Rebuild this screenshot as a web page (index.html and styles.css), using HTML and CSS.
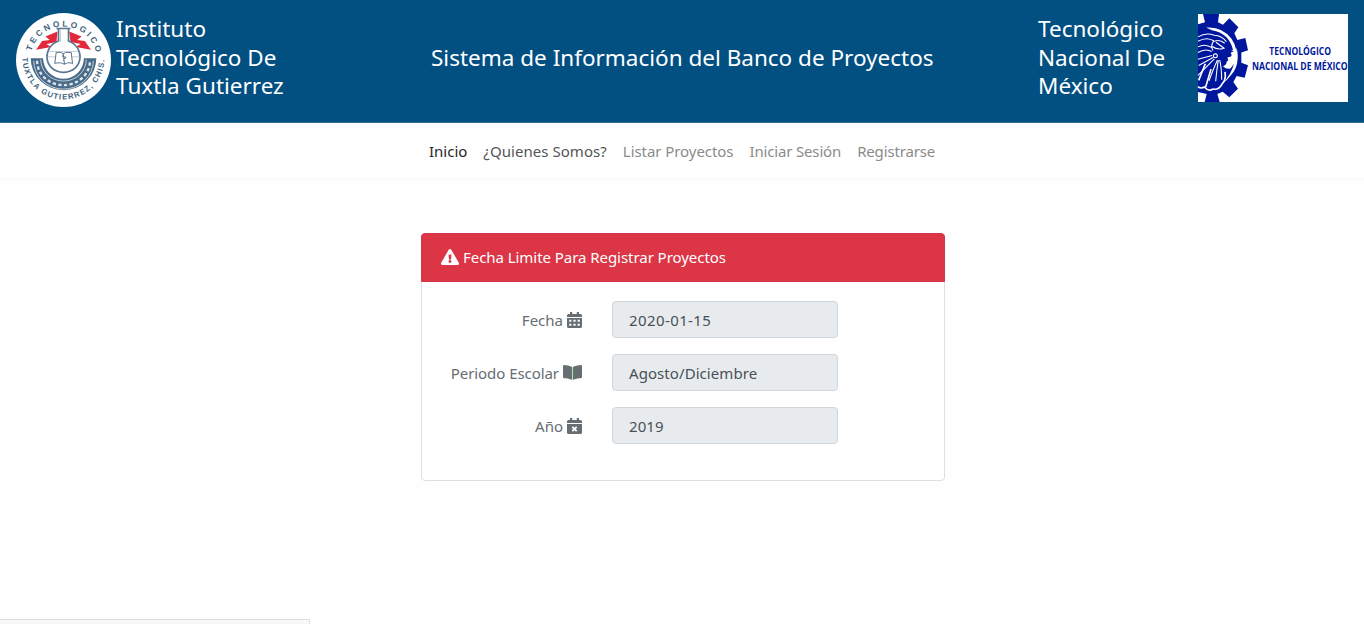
FILE: index.html
```html
<!DOCTYPE html>
<html lang="es">
<head>
<meta charset="utf-8">
<title>Sistema de Información del Banco de Proyectos</title>
<link rel="stylesheet" href="styles.css">
</head>
<body>
<header class="banner">
  <div class="brand">
    <svg class="seal" viewBox="18 16 284 279" preserveAspectRatio="none">
      <defs>
        <path id="arc-top" d="M60 156A100 100 0 0 1 260 156"/>
        <path id="arc-bottom" d="M38 146A122 122 0 1 0 281 136"/>
      </defs>
      <ellipse cx="160" cy="155.500" rx="142" ry="139.500" fill="#fff"/>
      <path d="M142 71L106 86L119 96L96 99L78 125L123 117L109 108L139 102ZM177 71L214 86L201 96L224 99L242 125L197 117L211 108L181 102Z" fill="#e3283b"/>
      <path d="M62 150H99A61 61 0 0 0 221 150H258A98 95 0 0 1 62 150Z" fill="#486987"/>
      <path d="M71 158A89 84 0 0 0 249 158" fill="none" stroke="#fff" stroke-width="2"/>
      <path d="M81 158A79 72 0 0 0 239 158" fill="none" stroke="#dce5ec" stroke-width="7" stroke-dasharray="10 7"/>
      <path d="M92 154A68 64 0 0 0 228 154" fill="none" stroke="#fff" stroke-width="2"/>
      <path d="M139 62H181M145 62V99C96 116 98 189 160 192C222 189 224 116 175 99V62" fill="#fff" stroke="#59758f" stroke-width="5"/>
      <path d="M151 65V102M118 130H202M111 146H136M184 146H209" fill="none" stroke="#a3b3c2" stroke-width="2"/>
      <path d="M138 134Q151 130 159 137Q170 130 183 134L187 165Q172 161 163 168Q151 161 134 165ZM159 137L163 168M155 143L167 148L158 157" fill="#fff" stroke="#59758f" stroke-width="3"/>
      <text class="seal-text seal-top"><textPath href="#arc-top" startOffset="27" textLength="264">TECNOLOGICO</textPath></text>
      <text class="seal-text"><textPath href="#arc-bottom" startOffset="2" textLength="382">TUXTLA GUTIERREZ, CHIS.</textPath></text>
    </svg>
    <h1 class="heading">Instituto<br>Tecnológico De<br>Tuxtla Gutierrez</h1>
  </div>
  <h2 class="heading heading-center">Sistema de Información del Banco de Proyectos</h2>
  <div class="partner">
    <h2 class="heading">Tecnológico<br>Nacional De<br>México</h2>
    <svg class="tecnm" viewBox="534 41 450 265" preserveAspectRatio="none">
      <path d="M534 41H984V306H534Z" fill="#fff"/>
      <path fill="#00169c" d="M534 72L555 66L549 41H597L594 66L609 73L628 54L655 81L643 99L652 119L676 113L684 150L664 157V188L684 195L674 233L650 228L640 246L654 266L628 292L608 275L592 282L599 306H554L560 282L534 276Z"/>
      <g fill="none" stroke="#fff" stroke-width="3.200">
        <path d="M534 110Q558 95 583 105Q605 106 619 124M534 123Q562 108 583 123Q600 117 614 129M534 140Q555 129 577 143M534 157Q556 143 575 154M534 177L576 166M536 196L579 172M534 226L583 176M567 242Q579 208 592 180M587 244Q590 210 595 180M605 239Q605 204 599 179M582 121Q570 136 579 151M588 126L612 144Q593 151 577 139"/>
        <circle cx="586" cy="167" r="6"/>
      </g>
      <path fill="none" stroke="#fff" stroke-width="5" d="M534 260Q543 267 553 261Q566 276 579 267Q596 271 606 252Q619 239 615 215M536 241L556 191M557 261L573 207"/>
      <path d="M558 82Q606 78 634 115Q655 145 648 183L632 204Q620 209 609 198Q622 193 619 184L610 177L619 170L615 160L628 150L639 149Q627 99 576 90Z" fill="#fff"/>
      <path d="M616 150Q630 147 641 153L632 158Q637 165 633 169L622 172L625 180L617 187L603 176L611 163Z" fill="#00169c"/>
      <path d="M650 142Q661 194 634 224Q622 241 606 251Q637 222 644 180Z" fill="#fff"/>
      <g class="tecnm-text">
        <text x="748" y="166" textLength="185" lengthAdjust="spacingAndGlyphs">TECNOLÓGICO</text>
        <text x="696" y="209" textLength="287" lengthAdjust="spacingAndGlyphs">NACIONAL DE MÉXICO</text>
      </g>
    </svg>
  </div>
</header>
<nav class="nav">
  <a class="nav-link active">Inicio</a>
  <a class="nav-link hover">¿Quienes Somos?</a>
  <a class="nav-link tight">Listar Proyectos</a>
  <a class="nav-link tighter">Iniciar Sesión</a>
  <a class="nav-link tighter">Registrarse</a>
</nav>
<main class="card">
  <div class="card-header">
    <svg class="icon-warning" viewBox="0 0 576 512"><path fill="currentColor" d="M569.517 440.013C587.975 472.007 564.806 512 527.940 512H48.054c-36.937 0-59.999-40.055-41.577-71.987L246.423 23.985c18.467-32.009 64.720-31.951 83.154 0l239.940 416.028zM288 354c-25.405 0-46 20.595-46 46s20.595 46 46 46 46-20.595 46-46-20.595-46-46-46zm-43.673-165.346l7.418 136c.347 6.364 5.609 11.346 11.982 11.346h48.546c6.373 0 11.635-4.982 11.982-11.346l7.418-136c.375-6.874-5.098-12.654-11.982-12.654h-63.383c-6.884 0-12.356 5.780-11.981 12.654z"/></svg>
    <span>Fecha Limite Para Registrar Proyectos</span>
  </div>
  <div class="card-body">
    <div class="row">
      <label class="label"><span>Fecha</span>
        <svg class="icon" viewBox="0 0 15 16"><path fill="currentColor" fill-rule="evenodd" d="M0 5V3.500Q0 2 1.500 2H3V0H5.200V2H9.800V0H12V2H13.500Q15 2 15 3.500V5ZM0 6H15V14.500Q15 16 13.500 16H1.500Q0 16 0 14.500ZM2.200 7.700V9.700H4.400V7.700ZM6.400 7.700V9.700H8.600V7.700ZM10.600 7.700V9.700H12.800V7.700ZM2.200 11.700V13.700H4.400V11.700ZM6.400 11.700V13.700H8.600V11.700ZM10.600 11.700V13.700H12.800V11.700Z"/></svg>
      </label>
      <div class="field numeric">2020-01-15</div>
    </div>
    <div class="row">
      <label class="label label-periodo"><span>Periodo Escolar</span>
        <svg class="icon-book" viewBox="0 0 576 448"><path fill="currentColor" d="M542 0C488 3 380 14 314 52Q304 57 304 66V432Q304 451 322 442C390 408 488 399 542 396Q576 393 576 364V32Q576 0 542 0ZM262 52C196 14 88 3 34 0Q0 0 0 32V364Q0 393 34 396C88 399 186 408 254 442Q272 451 272 432V66Q272 57 262 52Z"/><path d="M288 58V438" stroke="#8ee58e" stroke-width="24"/></svg>
      </label>
      <div class="field">Agosto/Diciembre</div>
    </div>
    <div class="row">
      <label class="label"><span>Año</span>
        <svg class="icon" viewBox="0 0 15 16"><path fill="currentColor" d="M0 5V3.500Q0 2 1.500 2H3V0H5.200V2H9.800V0H12V2H13.500Q15 2 15 3.500V5ZM0 6H15V14.500Q15 16 13.500 16H1.500Q0 16 0 14.500Z"/><path d="M5.300 8.800L9.700 13.200M9.700 8.800L5.300 13.200" stroke="#fff" stroke-width="1.800"/></svg>
      </label>
      <div class="field">2019</div>
    </div>
  </div>
</main>
<div class="status-bar"></div>
</body>
</html>
```
FILE: styles.css
```css
* { box-sizing: border-box; }
body {
  margin: 0;
  height: 624px;
  overflow: hidden;
  background: #fefefe;
  font-family: "Noto Sans", "Open Sans", sans-serif;
  font-size: 15px;
  color: #212529;
}
.banner {
  display: grid;
  grid-template-columns: 415px 502px 1fr;
  height: 123px;
  padding: 13px 16px;
  background: #024f82;
  border-bottom: 1px solid #316f98;
}
.brand { display: flex; gap: 5px; }
.seal { width: 95px; height: 94px; flex: none; }
.seal-text { font: 700 23px "Liberation Sans", Arial, sans-serif; fill: #3d5f7d; }
.seal-top { font-size: 25px; }
.heading {
  margin: 2px 0 0;
  font-size: 22.500px;
  font-weight: 400;
  line-height: 28.500px;
  color: #fff;
  white-space: nowrap;
}
.heading-center { margin-top: 31px; }
.partner { display: flex; justify-content: space-between; padding-left: 105px; }
.tecnm { width: 150px; height: 88px; margin-top: 1px; flex: none; overflow: visible; }
.tecnm-text { font: 700 34px "Open Sans", sans-serif; fill: #00169c; }
.nav {
  display: flex;
  justify-content: center;
  align-items: center;
  gap: 16px;
  height: 56px;
  background: #fff;
  border-bottom: 1px solid #f8f8f8;
  box-shadow: 0 1px 2px rgba(0, 0, 0, .03);
}
.nav-link { color: #8b8b8b; white-space: nowrap; }
.nav-link.tight { letter-spacing: -.06px; }
.nav-link.tighter { letter-spacing: -.16px; }
.nav-link.hover { color: #555; letter-spacing: .05px; }
.nav-link.active { color: #262626; }
.card {
  width: 524px;
  height: 248px;
  margin: 54px 0 0 421px;
  background: #fff;
  border: 1px solid #dfdfdf;
  border-radius: 4px;
}
.card-header {
  display: flex;
  align-items: center;
  gap: 4px;
  height: 49px;
  margin: -1px -1px 0;
  padding: 0 19px 2px;
  background: #dc3545;
  border: 1px solid #d33646;
  border-radius: 4px 4px 0 0;
  color: #fff;
  letter-spacing: -.05px;
}
.icon-warning { width: 18px; height: 16px; }
.card-body { display: flex; flex-direction: column; gap: 16px; padding-top: 19px; }
.row { display: flex; align-items: center; gap: 30px; }
.label {
  display: flex;
  justify-content: flex-end;
  align-items: center;
  gap: 4px;
  width: 160px;
  color: #666d73;
  white-space: nowrap;
}
.label-periodo { letter-spacing: -.06px; }
.icon { width: 15px; height: 16px; }
.icon-book { width: 19px; height: 15px; }
.field {
  width: 226px;
  height: 37px;
  padding-left: 16px;
  line-height: 36px;
  background: #e8ebee;
  border: 1px solid #d0d6dc;
  border-radius: 4px;
  color: #495057;
  letter-spacing: .07px;
}
.field.numeric { letter-spacing: .4px; }
.status-bar {
  position: fixed;
  left: 0;
  bottom: 0;
  width: 310px;
  height: 5px;
  background: #f8f8f8;
  border-top: 1px solid #dedede;
  border-right: 1px solid #dedede;
}
```
